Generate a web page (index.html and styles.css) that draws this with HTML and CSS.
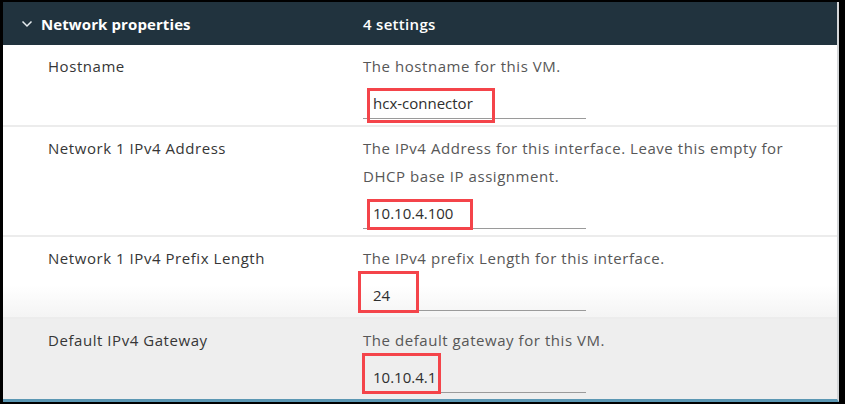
FILE: index.html
```html
<!DOCTYPE html>
<html>
<head>
<meta charset="utf-8">
<link rel="stylesheet" href="styles.css">
</head>
<body>
<div class="frame">
  <div class="panel">
    <div class="header">
      <svg class="chev" width="12" height="8" viewBox="0 0 12 8"><path d="M1.5 1.5 L6 6 L10.5 1.5" fill="none" stroke="#e6ecef" stroke-width="1.5"/></svg>
      <span class="title">Network properties</span>
      <span class="count">4 settings</span>
    </div>
    <div class="row">
      <div class="label">Hostname</div>
      <div class="detail">
        <div class="desc">The hostname for this VM.</div>
        <div class="field"><span class="value">hcx-connector</span><span class="mark mark-1"></span></div>
      </div>
    </div>
    <div class="row">
      <div class="label">Network 1 IPv4 Address</div>
      <div class="detail">
        <div class="desc">The IPv4 Address for this interface. Leave this empty for<br>DHCP base IP assignment.</div>
        <div class="field"><span class="value">10.10.4.100</span><span class="mark mark-2"></span></div>
      </div>
    </div>
    <div class="row row-fade">
      <div class="label">Network 1 IPv4 Prefix Length</div>
      <div class="detail">
        <div class="desc">The IPv4 prefix Length for this interface.</div>
        <div class="field"><span class="value">24</span><span class="mark mark-3"></span></div>
      </div>
    </div>
    <div class="row row-gray">
      <div class="label">Default IPv4 Gateway</div>
      <div class="detail">
        <div class="desc">The default gateway for this VM.</div>
        <div class="field"><span class="value">10.10.4.1</span><span class="mark mark-4"></span></div>
      </div>
    </div>
  </div>
</div>
</body>
</html>
```
FILE: styles.css
```css
* { box-sizing: border-box; }
html, body { margin: 0; padding: 0; background: #000; }
body {
  width: 845px;
  height: 404px;
  overflow: hidden;
  font-family: "Open Sans", "Liberation Sans", sans-serif;
}
.frame {
  width: 845px;
  height: 404px;
  padding: 2px 6px 2px 3px;
  background: #000;
}
.panel {
  height: 400px;
  background: #fff;
  border-right: 2px solid #d4d6d8;
  border-bottom: 3px solid #5b97b3;
  overflow: hidden;
}
.header {
  height: 43px;
  background: #21333e;
  display: flex;
  align-items: center;
  color: #fff;
  font-size: 15px;
}
.chev { margin-left: 18px; margin-right: 8px; }
.title { font-weight: 700; width: 322px; letter-spacing: 0.1px; }
.count { font-weight: 600; letter-spacing: 0.3px; }
.row {
  display: grid;
  grid-template-columns: 360px 1fr;
  padding: 7px 0 6px;
  border-bottom: 2px solid #ececec;
}
.row-fade { background: linear-gradient(#fff 60%, #f4f4f4); }
.row-gray { background: #eeeeee; border-bottom: none; }
.label {
  padding-left: 45px;
  line-height: 28px;
  font-size: 15px;
  letter-spacing: 0.55px;
  color: #363636;
}
.detail { display: flex; flex-direction: column; }
.desc {
  line-height: 28px;
  font-size: 15px;
  letter-spacing: 0.55px;
  color: #575757;
}
.field {
  position: relative;
  width: 223px;
  height: 31px;
  margin-top: 8px;
  border-bottom: 1px solid #9a9a9a;
  display: flex;
  align-items: center;
  padding-left: 10px;
  font-size: 15px;
  color: #2e2e2e;
}
.mark {
  position: absolute;
  border: 3px solid #f4444a;
}
.mark-1 { left: 4px; top: 0; width: 128px; height: 35px; }
.mark-2 { left: 4px; top: 1px; width: 106px; height: 31px; }
.mark-3 { left: -5px; top: -9px; width: 61px; height: 42px; }
.mark-4 { left: -1px; top: -9px; width: 79px; height: 41px; }
```
